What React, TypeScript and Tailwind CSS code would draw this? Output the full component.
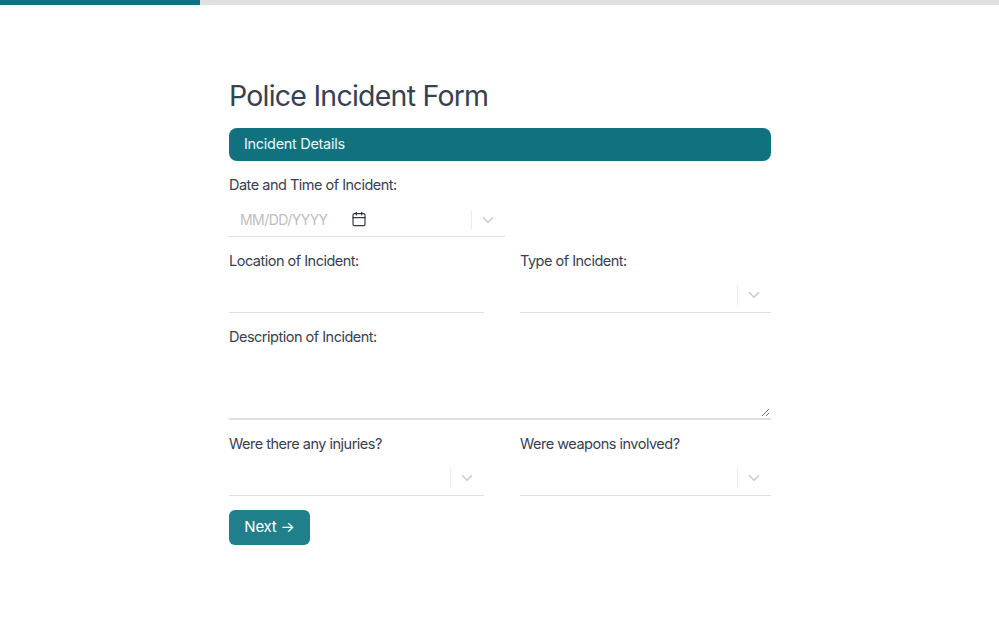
import { Calendar, ChevronDown } from "lucide-react";
import type { ReactNode } from "react";

function Label({ children }: { children: ReactNode }) {
  return <label className="block h-[18px] text-[14.5px] leading-[17px] text-[#374151] tracking-[-0.5px]">{children}</label>;
}

function Indicator() {
  return (
    <div className="flex items-center">
      <div className="h-5 w-px bg-[#ececec]" />
      <div className="flex w-[33px] justify-center pr-px">
        <ChevronDown className="h-[18px] w-[18px] text-[#cccccc]" strokeWidth={2.25} />
      </div>
    </div>
  );
}

function SelectField({ className }: { className: string }) {
  return (
    <div className={`flex items-center justify-end border-b border-[#dcdfe3] ${className}`}>
      <Indicator />
    </div>
  );
}

export default function App() {
  return (
    <div className="h-[625px] w-[999px] bg-white font-['Inter','Liberation_Sans',sans-serif]">
      <div className="h-[5px] w-full bg-[#e0e0e0]">
        <div className="h-full w-[200px] bg-[#10717f]" />
      </div>
      <div className="ml-[229px] w-[542px] pt-[72px]">
        <h1 className="h-[38px] text-[28.5px] leading-[38px] font-normal text-[#374151] tracking-[-0.77px]">Police Incident Form</h1>
        <div className="mt-[13px] flex h-[33px] items-center rounded-lg bg-[#10717f] px-[15px] pb-px text-[14.5px] text-[#e6fbfb] tracking-[-0.3px]">
          Incident Details
        </div>

        <div className="mt-[15px]"><Label>Date and Time of Incident:</Label></div>
        <div className="mt-[9px] flex h-[34px] w-[276px] items-center border-b border-[#dcdfe3]">
          <span className="ml-[11px] w-[111px] pb-px text-[14px] tracking-[-0.55px] text-[#bdbdbd]">MM/DD/YYYY</span>
          <Calendar className="mb-px h-4 w-4 text-[#333a45]" strokeWidth={1.75} />
          <div className="flex-1" />
          <Indicator />
        </div>

        <div className="mt-[15px] flex gap-9">
          <div className="w-[255px]">
            <Label>Location of Incident:</Label>
            <div className="mt-[8px] h-[35px] border-b border-[#dcdfe3]" />
          </div>
          <div className="w-[251px]">
            <Label>Type of Incident:</Label>
            <SelectField className="mt-[8px] h-[35px] pb-px" />
          </div>
        </div>

        <div className="mt-[15px]"><Label>Description of Incident:</Label></div>
        <div className="relative mt-[9px] h-[65px] border-b-2 border-[#dcdfe3]">
          <svg className="absolute right-[1px] bottom-[1px]" width="9" height="9" viewBox="0 0 9 9">
            <path d="M1 8 L8 1 M5 8 L8 5" stroke="#777" strokeWidth="1" fill="none" />
          </svg>
        </div>

        <div className="mt-[15px] flex gap-9">
          <div className="w-[255px]">
            <Label>Were there any injuries?</Label>
            <SelectField className="mt-[9px] h-[34px] pb-[2px]" />
          </div>
          <div className="w-[251px]">
            <Label>Were weapons involved?</Label>
            <SelectField className="mt-[9px] h-[34px] pb-[2px]" />
          </div>
        </div>

        <div className="mt-[14px] flex h-[35px] w-[81px] items-center justify-center rounded-md bg-[#1f7f8b] text-[15px] tracking-[-0.2px] text-white">
          Next →
        </div>
      </div>
    </div>
  );
}
